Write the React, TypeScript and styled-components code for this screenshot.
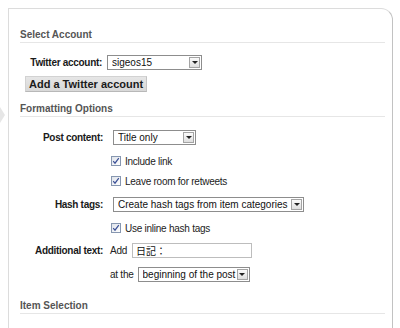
import React from "react";
import styled, { createGlobalStyle } from "styled-components";

const Global = createGlobalStyle`
  html, body { margin: 0; padding: 0; background: #ffffff; }
  body {
    font-family: "Liberation Sans", Arial, sans-serif;
    color: #222;
  }
`;

const Page = styled.div`
  position: relative;
  height: 328px;
  overflow: hidden;
  box-sizing: border-box;
  padding: 8px 0 0 8px;
`;

const Pointer = styled.div`
  position: absolute;
  left: 0;
  top: 107px;
  width: 0;
  height: 0;
  border-top: 8px solid transparent;
  border-bottom: 8px solid transparent;
  border-left: 5px solid #e6e6e6;
`;

const Panel = styled.div`
  width: 385px;
  height: 360px;
  box-sizing: border-box;
  border: 1px solid #dcdcdc;
  border-right-color: #c2c2c2;
  border-bottom: none;
  border-top-right-radius: 12px;
  padding: 19px 7px 0 11px;
`;

const SectionTitle = styled.h3<{ $top?: number }>`
  margin: ${(p) => p.$top ?? 0}px 0 0 0;
  padding: 0 0 1px 0;
  font: bold 10px/13px "Liberation Sans", Arial, sans-serif;
  color: #555;
  border-bottom: 1px solid #e6e6e6;
`;

const Row = styled.div<{ $top: number }>`
  display: flex;
  align-items: center;
  gap: 7px;
  margin-top: ${(p) => p.$top}px;
  min-height: 14px;
`;

const FieldLabel = styled.span<{ $width: number }>`
  width: ${(p) => p.$width}px;
  flex: none;
  text-align: right;
  font: bold 10px/13px "Liberation Sans", Arial, sans-serif;
  letter-spacing: -0.3px;
  color: #1a1a1a;
  white-space: nowrap;
`;

const Controls = styled.div`
  display: flex;
  align-items: center;
  gap: 4px;
`;

const SelectBox = styled.div<{ $width: number; $indent?: number }>`
  display: flex;
  align-items: center;
  box-sizing: border-box;
  width: ${(p) => p.$width}px;
  height: 15px;
  margin-left: ${(p) => p.$indent ?? 0}px;
  border: 1px solid #8d8d8d;
  background: #fff;
  padding: 0 1px 0 4px;
  font: 10px/13px "Liberation Sans", Arial, sans-serif;
  color: #111;
`;

const SelectText = styled.span`
  flex: 1;
  white-space: nowrap;
  overflow: hidden;
`;

const SelectArrow = styled.span`
  flex: none;
  width: 11px;
  height: 11px;
  box-sizing: border-box;
  border: 1px solid #a4a4a4;
  background: linear-gradient(#fbfbfb, #dedede);
  display: flex;
  align-items: center;
  justify-content: center;
  &::after {
    content: "";
    border-left: 3px solid transparent;
    border-right: 3px solid transparent;
    border-top: 3px solid #222;
  }
`;

const AddButton = styled.button`
  display: block;
  margin: 6px 0 0 5px;
  height: 16px;
  box-sizing: border-box;
  padding: 0 3px;
  border: 1px solid #d2d2d2;
  border-bottom-color: #b8b8b8;
  border-right-color: #c4c4c4;
  background: linear-gradient(#e6e6e6, #d8d8d8);
  font: bold 11px/14px "Liberation Sans", Arial, sans-serif;
  color: #1a1a1a;
`;

const Text = styled.span`
  font: 10px/13px "Liberation Sans", Arial, sans-serif;
  letter-spacing: -0.25px;
  color: #222;
  white-space: nowrap;
`;

const CheckBox = styled.span`
  flex: none;
  width: 10px;
  height: 10px;
  margin-left: 1px;
  box-sizing: border-box;
  border: 1px solid #8797b0;
  background: linear-gradient(135deg, #dfe3ea, #ffffff);
  display: flex;
  align-items: center;
  justify-content: center;
`;

const TextInput = styled.div`
  box-sizing: border-box;
  width: 120px;
  height: 15px;
  margin-left: 1px;
  border: 1px solid #bdbdbd;
  padding: 0 3px;
  font: 10px/13px "Noto Sans CJK JP", "Liberation Sans", sans-serif;
  color: #111;
  display: flex;
  align-items: center;
`;

const Check = () => (
  <svg width="8" height="8" viewBox="0 0 8 8">
    <path d="M1.2 4.2 L3 6.2 L6.8 1.2" fill="none" stroke="#3a4f96" strokeWidth="1.2" />
  </svg>
);

const Select = ({ width, indent, children }: { width: number; indent?: number; children: React.ReactNode }) => (
  <SelectBox $width={width} $indent={indent}>
    <SelectText>{children}</SelectText>
    <SelectArrow />
  </SelectBox>
);

const CheckRow = ({ top, label }: { top: number; label: string }) => (
  <Row $top={top}>
    <FieldLabel $width={83} />
    <Controls>
      <CheckBox>
        <Check />
      </CheckBox>
      <Text>{label}</Text>
    </Controls>
  </Row>
);

export default function App() {
  return (
    <>
      <Global />
      <Page>
        <Pointer />
        <Panel>
          <SectionTitle>Select Account</SectionTitle>
          <Row $top={12}>
            <FieldLabel $width={82}>Twitter account:</FieldLabel>
            <Select width={95} indent={-2}>sigeos15</Select>
          </Row>
          <AddButton type="button">Add a Twitter account</AddButton>

          <SectionTitle $top={10}>Formatting Options</SectionTitle>
          <Row $top={13}>
            <FieldLabel $width={83}>Post content:</FieldLabel>
            <Select width={83} indent={3}>Title only</Select>
          </Row>
          <CheckRow top={9} label="Include link" />
          <CheckRow top={6} label="Leave room for retweets" />
          <Row $top={9}>
            <FieldLabel $width={83}>Hash tags:</FieldLabel>
            <Select width={191} indent={3}>Create hash tags from item categories</Select>
          </Row>
          <CheckRow top={9} label="Use inline hash tags" />
          <Row $top={8}>
            <FieldLabel $width={83}>Additional text:</FieldLabel>
            <Controls>
              <Text>Add</Text>
              <TextInput>日記：</TextInput>
            </Controls>
          </Row>
          <Row $top={9}>
            <FieldLabel $width={83} />
            <Controls>
              <Text>at the</Text>
              <Select width={112} indent={0}>beginning of the post</Select>
            </Controls>
          </Row>

          <SectionTitle $top={17}>Item Selection</SectionTitle>
        </Panel>
      </Page>
    </>
  );
}
